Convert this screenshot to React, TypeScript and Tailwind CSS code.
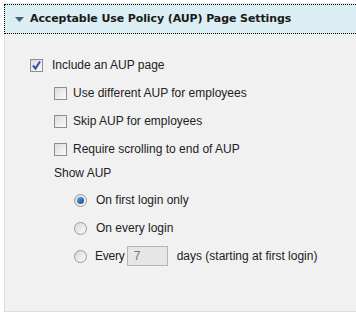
import React from 'react'

function Check({ checked }: { checked?: boolean }) {
  return (
    <span className="flex h-[13px] w-[13px] shrink-0 items-center justify-center border border-[#8e8f8f] bg-gradient-to-br from-[#dcdcdc] to-[#fbfbfb]">
      {checked && (
        <svg width="11" height="11" viewBox="0 0 11 11">
          <path d="M2 5.5 L4.5 8.5 L9 1.5" fill="none" stroke="#2f4fa8" strokeWidth="2" />
        </svg>
      )}
    </span>
  )
}

function Radio({ checked }: { checked?: boolean }) {
  return (
    <span className="flex h-[13px] w-[13px] shrink-0 items-center justify-center rounded-full border border-[#9a9a9a] bg-gradient-to-br from-[#d8d8d8] to-[#fafafa]">
      {checked && <span className="h-[7px] w-[7px] rounded-full bg-gradient-to-br from-[#5aa5e0] to-[#0b4f96]" />}
    </span>
  )
}

function Row({ children, className = '' }: { children: React.ReactNode; className?: string }) {
  return <div className={`flex h-[28px] items-center ${className}`}>{children}</div>
}

export default function App() {
  return (
    <div className="h-[320px] w-[356px] bg-white pl-[4px] pt-[3px] font-['Liberation_Sans',Arial,sans-serif] text-[12px] text-[#222]">
      <div className="border-t border-[#e4eef4]">
        <div className="flex h-[30px] items-center border border-r-0 border-dotted border-black bg-[#dbeef4] pl-[10px]">
          <svg width="9" height="7" viewBox="0 0 9 7" className="mr-[6px]">
            <path d="M0 1 L9 1 L4.5 6 Z" fill="#4a6076" />
          </svg>
          <span className="font-['DejaVu_Sans',sans-serif] text-[11px] font-bold tracking-[-0.1px] text-[#1a1a1a]">
            Acceptable Use Policy (AUP) Page Settings
          </span>
        </div>
      </div>
      <div className="h-[278px] border-b border-l border-[#dcdcdc] bg-[#f1f1f1] pt-[17px]">
        <Row className="pl-[25px]">
          <Check checked />
          <span className="ml-[9px]">Include an AUP page</span>
        </Row>
        <div className="pl-[49px]">
          <Row>
            <Check />
            <span className="ml-[6px]">Use different AUP for employees</span>
          </Row>
          <Row>
            <Check />
            <span className="ml-[6px]">Skip AUP for employees</span>
          </Row>
          <Row>
            <Check />
            <span className="ml-[6px]">Require scrolling to end of AUP</span>
          </Row>
          <div className="flex h-[19px] items-center">Show AUP</div>
          <div className="pl-[20px] pt-[4px]">
            <Row>
              <Radio checked />
              <span className="ml-[9px]">On first login only</span>
            </Row>
            <Row>
              <Radio />
              <span className="ml-[9px]">On every login</span>
            </Row>
            <Row>
              <Radio />
              <span className="ml-[8px] tracking-[-0.2px]">Every</span>
              <span className="ml-[2px] flex h-[20px] w-[41px] items-center border border-[#b5b5b5] bg-[#e6e6e6] pl-[6px] text-[#777]">
                7
              </span>
              <span className="ml-[9px]">days (starting at first login)</span>
            </Row>
          </div>
        </div>
      </div>
    </div>
  )
}
